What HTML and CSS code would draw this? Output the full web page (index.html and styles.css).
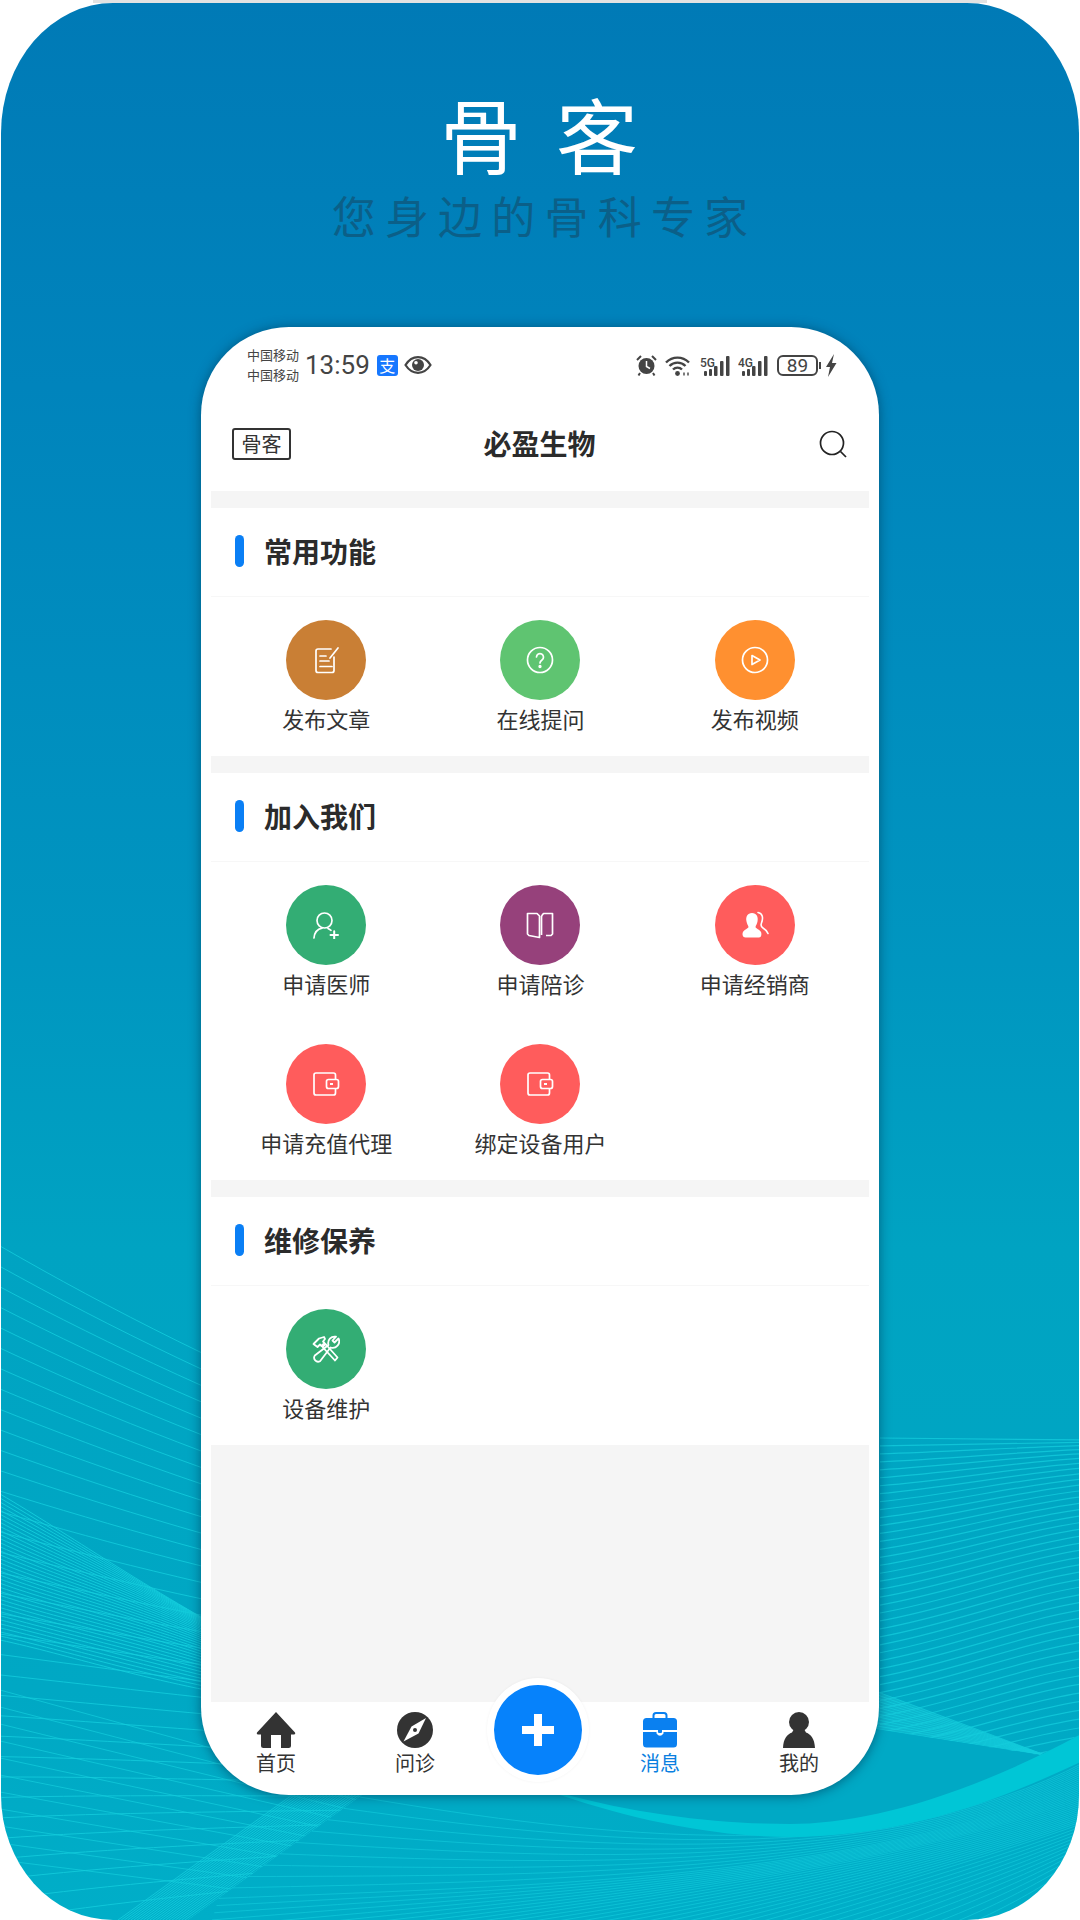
FILE: index.html
```html
<!DOCTYPE html>
<html lang="zh-CN">
<head>
  <meta charset="UTF-8" />
  <title>骨客</title>
  <link rel="stylesheet" href="styles.css">
</head>
<body>
  <div class="top-edge"></div>
  <div class="poster">
    <svg class="waves" viewBox="0 0 1080 1920">
      <defs>
        <clipPath id="left-clip"><path d="M0 1200H500V1700L362 1795L188 1920H0Z"/></clipPath>
      </defs>
      <g id="waves-left" clip-path="url(#left-clip)"></g>
      <g id="waves-right"></g>
    </svg>
    <h1 class="poster-title">骨客</h1>
    <p class="poster-sub">您身边的骨科专家</p>

    <div class="phone">
      <div class="status">
        <div class="carriers"><span>中国移动</span><span>中国移动</span></div>
        <span class="time">13:59</span>
        <span class="alipay">支</span>
        <svg class="eye" width="28" height="18" viewBox="0 0 28 18">
          <path d="M1.5 9C5 3.5 9 1.2 14 1.2S23 3.500 26.500 9C23 14.500 19 16.800 14 16.800S5 14.500 1.500 9Z" fill="none" stroke="#444" stroke-width="2.200"/>
          <circle cx="14" cy="9" r="6" fill="#444"/>
          <circle cx="12" cy="6.800" r="1.800" fill="#fff"/>
        </svg>
        <div class="status-right">
          <svg width="21" height="21" viewBox="0 0 21 21">
            <circle cx="10.500" cy="11" r="8" fill="#444"/>
            <path d="M10.500 6V11.500L14 13.500" fill="none" stroke="#fff" stroke-width="1.500"/>
            <path d="M1 5L5 1M20 5L16 1M4 18L2.500 20.500M17 18L18.500 20.500" stroke="#444" stroke-width="2"/>
          </svg>
          <svg width="27" height="21" viewBox="0 0 27 21" fill="none" stroke="#444" stroke-width="2.400">
            <path d="M1 7.500C7.500 1 17.500 1 24 7.500"/>
            <path d="M4.500 11C9 6.500 16 6.500 20.500 11"/>
            <path d="M8 14.500C10.500 12 14.500 12 17 14.500"/>
            <circle cx="12.500" cy="18.500" r="2.400" fill="#444" stroke="none"/>
            <path d="M19 17.500V20.500M23 17.500V20.500" stroke-width="1.400"/>
          </svg>
          <svg width="30" height="21" viewBox="0 0 30 21">
            <text class="net" x="0" y="11.500">5G</text>
            <g fill="#444">
              <rect x="4" y="16" width="3" height="5" rx="1"/><rect x="9" y="14" width="3" height="7" rx="1"/>
              <rect x="14" y="11" width="3.500" height="10" rx="1"/><rect x="20" y="6" width="3.500" height="15" rx="1"/>
              <rect x="26" y="1" width="3.500" height="20" rx="1"/>
            </g>
          </svg>
          <svg width="30" height="21" viewBox="0 0 30 21">
            <text class="net" x="0" y="11.500">4G</text>
            <g fill="#444">
              <rect x="4" y="16" width="3" height="5" rx="1"/><rect x="9" y="14" width="3" height="7" rx="1"/>
              <rect x="14" y="11" width="3.500" height="10" rx="1"/><rect x="20" y="6" width="3.500" height="15" rx="1"/>
              <rect x="26" y="1" width="3.500" height="20" rx="1"/>
            </g>
          </svg>
          <div class="battery">89</div>
          <span class="battery-nub"></span>
          <svg class="bolt" width="12" height="23" viewBox="0 0 12 23"><path d="M9 0L1 13H5L3 23L11.500 9H7Z" fill="#444"/></svg>
        </div>
      </div>

      <header class="app-bar">
        <span class="app-tag">骨客</span>
        <span class="app-title">必盈生物</span>
        <svg class="search" width="28" height="28" viewBox="0 0 28 28" fill="none" stroke="#222" stroke-width="1.700">
          <circle cx="13" cy="13" r="11.500"/>
          <path d="M21.500 21.500L27 27"/>
        </svg>
      </header>

      <div class="content">
        <div class="gap"></div>
        <section class="group">
          <h2 class="group-title">常用功能</h2>
          <div class="grid">
            <div class="item">
              <div class="circle brown">
                <svg width="28" height="28" viewBox="0 0 28 28" fill="none" stroke="#fff" stroke-width="1.700" stroke-linecap="round">
                  <path d="M22 11V24.500a2 2 0 0 1-2 2H6a2 2 0 0 1-2-2V5a2 2 0 0 1 2-2H19"/>
                  <path d="M8 10H14M8 15H17M8 20.500H20"/>
                  <path d="M18 12L26 2"/>
                </svg>
              </div>
              <span class="item-label">发布文章</span>
            </div>
            <div class="item">
              <div class="circle green">
                <svg width="28" height="28" viewBox="0 0 28 28" fill="none" stroke="#fff" stroke-width="1.700" stroke-linecap="round">
                  <circle cx="14" cy="14" r="12.500"/>
                  <path d="M10.500 11a3.500 3.500 0 1 1 5.500 3c-1.300.9-2 1.600-2 3"/>
                  <circle cx="14" cy="20.500" r=".8" fill="#fff"/>
                </svg>
              </div>
              <span class="item-label">在线提问</span>
            </div>
            <div class="item">
              <div class="circle orange">
                <svg width="28" height="28" viewBox="0 0 28 28" fill="none" stroke="#fff" stroke-width="1.700" stroke-linejoin="round">
                  <circle cx="14" cy="14" r="12.500"/>
                  <path d="M11 9.500L19 14L11 18.500Z"/>
                </svg>
              </div>
              <span class="item-label">发布视频</span>
            </div>
          </div>
        </section>

        <div class="gap"></div>
        <section class="group">
          <h2 class="group-title">加入我们</h2>
          <div class="grid">
            <div class="item">
              <div class="circle teal">
                <svg width="28" height="28" viewBox="0 0 28 28" fill="none" stroke="#fff" stroke-width="1.700" stroke-linecap="round">
                  <circle cx="12.500" cy="9.500" r="7.500"/>
                  <path d="M2 27C2.500 21.500 6 18 10 17.200"/>
                  <path d="M16 17.500C17 18 18 18.500 19 19.300"/>
                  <path d="M18.500 24H26M22.200 20.300V27.700" stroke-width="2"/>
                </svg>
              </div>
              <span class="item-label">申请医师</span>
            </div>
            <div class="item">
              <div class="circle purple">
                <svg width="28" height="28" viewBox="0 0 28 28" fill="none" stroke="#fff" stroke-width="1.700" stroke-linejoin="round">
                  <path d="M1.500 2.500H11L13.500 5V26.500L3 24.500L1.500 23Z"/>
                  <path d="M15.500 5L17.500 2.500H26.500V23L25 24.500H20"/>
                  <path d="M15.500 5V24"/>
                </svg>
              </div>
              <span class="item-label">申请陪诊</span>
            </div>
            <div class="item">
              <div class="circle red">
                <svg width="28" height="28" viewBox="0 0 28 28">
                  <path d="M11 2C15.500 2 17.500 6 16.500 10.500C16 13 14.800 14.500 14.500 16C14.500 17.500 19 18.500 20 21C20.800 23 20.500 26.500 18 26.500H4.500C1.500 26.500 1 23 2 21C3 18.500 7.500 17.500 7.500 16C7.200 14.500 6 13 5.500 10.500C4.500 6 6.500 2 11 2Z" fill="#fff"/>
                  <path d="M17 1.500C21.500 2 22.500 7 20.500 12C19.700 14 19.500 15.500 22 17C24.500 18.500 26 20 27 22.500" fill="none" stroke="#fff" stroke-width="1.600" stroke-linecap="round"/>
                </svg>
              </div>
              <span class="item-label">申请经销商</span>
            </div>
            <div class="item">
              <div class="circle red">
                <svg width="28" height="28" viewBox="0 0 28 28" fill="none" stroke="#fff" stroke-width="1.700">
                  <path d="M23.500 9.500V5a2 2 0 0 0-2-2H4a2 2 0 0 0-2 2V23a2 2 0 0 0 2 2H21.500a2 2 0 0 0 2-2V18.500"/>
                  <rect x="14.500" y="9.500" width="12" height="9" rx="2"/>
                  <path d="M18 14H21" stroke-width="2"/>
                </svg>
              </div>
              <span class="item-label">申请充值代理</span>
            </div>
            <div class="item">
              <div class="circle red">
                <svg width="28" height="28" viewBox="0 0 28 28" fill="none" stroke="#fff" stroke-width="1.700">
                  <path d="M23.500 9.500V5a2 2 0 0 0-2-2H4a2 2 0 0 0-2 2V23a2 2 0 0 0 2 2H21.500a2 2 0 0 0 2-2V18.500"/>
                  <rect x="14.500" y="9.500" width="12" height="9" rx="2"/>
                  <path d="M18 14H21" stroke-width="2"/>
                </svg>
              </div>
              <span class="item-label">绑定设备用户</span>
            </div>
          </div>
        </section>

        <div class="gap"></div>
        <section class="group">
          <h2 class="group-title">维修保养</h2>
          <div class="grid">
            <div class="item">
              <div class="circle teal">
                <svg width="28" height="28" viewBox="0 0 28 28" fill="none" stroke="#fff" stroke-width="1.800" stroke-linejoin="round">
                  <path d="M1.500 9L7 3.500L12 2L13 4L11 6.500L12.500 8L9.500 11L8 9.500L5.500 12Z"/>
                  <path d="M10.500 12L13.500 9L25.500 22.500L23 25.500Z"/>
                  <path d="M26.500 3.500L22.500 7.500L20.500 5.500L24 1.700A6.500 6.500 0 0 0 16.500 10L2.800 20.500A4 4 0 0 0 8 26.200L18.500 12.500A6.500 6.500 0 0 0 26.500 3.500Z"/>
                </svg>
              </div>
              <span class="item-label">设备维护</span>
            </div>
          </div>
        </section>
        <div class="filler"></div>
      </div>

      <nav class="tabbar">
        <div class="tab">
          <svg width="40" height="36" viewBox="0 0 40 36">
            <path fill-rule="evenodd" d="M20 0L39 20.500Q40 22.500 37 22.500H35V33.500Q35 36 32.500 36H25V23H15V36H7.500Q5 36 5 33.500V22.500H3Q0 22.500 1 20.500Z" fill="#333"/>
          </svg>
          <span class="tab-label">首页</span>
        </div>
        <div class="tab">
          <svg width="36" height="36" viewBox="0 0 36 36">
            <circle cx="18" cy="18" r="18" fill="#333"/>
            <path d="M29 6L21.500 21.500L6.500 29.500L14.500 14.500Z" fill="#fff"/>
            <circle cx="18" cy="18" r="2" fill="#333"/>
          </svg>
          <span class="tab-label">问诊</span>
        </div>
        <div class="tab">
          <div class="add-ring">
            <div class="add-btn">
              <svg width="32" height="32" viewBox="0 0 32 32"><path d="M12 0H20V12H32V20H20V32H12V20H0V12H12Z" fill="#fff"/></svg>
            </div>
          </div>
        </div>
        <div class="tab active">
          <svg width="36" height="36" viewBox="0 0 36 36">
            <path d="M11.500 6V3.500Q11.500 1 14 1H22Q24.500 1 24.500 3.500V6" fill="none" stroke="#0a80f0" stroke-width="2"/>
            <path d="M4.500 6H31.500Q35 6 35 9.500V18H1V9.500Q1 6 4.500 6Z" fill="#0a80f0"/>
            <path d="M1 20H14.500V21.500Q18 26 21.500 21.500V20H35V32Q35 35.500 31.500 35.500H4.500Q1 35.500 1 32Z" fill="#0a80f0"/>
            <rect x="16" y="17" width="4" height="4" rx="1" fill="#0a80f0"/>
          </svg>
          <span class="tab-label">消息</span>
        </div>
        <div class="tab">
          <svg width="32" height="36" viewBox="0 0 32 36">
            <ellipse cx="16" cy="10" rx="10" ry="10" fill="#333"/>
            <path d="M11 17H21L23 20.500C28 22.500 31.500 26.500 32 36H0C.5 26.500 4 22.500 9 20.500Z" fill="#333"/>
          </svg>
          <span class="tab-label">我的</span>
        </div>
      </nav>
    </div>
  </div>
  <script src="waves.js"></script>
</body>
</html>
```

FILE: styles.css
```css
* {
  box-sizing: border-box;
}
body {
  margin: 0;
  width: 1080px;
  height: 1920px;
  background: #fff;
  font-family: "Noto Sans CJK SC", "Noto Sans", sans-serif;
  color: #333;
  overflow: hidden;
}
.top-edge {
  height: 3px;
  margin: 0 93px;
  background: #e2e2e2;
}
.poster {
  position: relative;
  height: 1917px;
  margin: 0 1px;
  padding-top: 90px;
  overflow: hidden;
  border-radius: 112px 112px 112px 112px / 130px 130px 125px 125px;
  background: linear-gradient(180deg, #007ab6 0%, #0084bc 20%, #0096c0 50%, #00a3c2 65%, #00a8c4 88%, #00aec8 100%);
}
.waves {
  position: absolute;
  left: -1px;
  top: -3px;
  width: 1080px;
  height: 1920px;
}
.poster-title {
  position: relative;
  margin: 0;
  padding-left: 32px;
  font-size: 82px;
  line-height: 80px;
  font-weight: 400;
  letter-spacing: 34px;
  text-align: center;
  color: #fff;
}
.poster-sub {
  position: relative;
  margin: 20px 0 0;
  padding-left: 9px;
  font-size: 44px;
  line-height: 44px;
  letter-spacing: 9.200px;
  text-align: center;
  color: #0b5f88;
}
.phone {
  position: relative;
  display: flex;
  flex-direction: column;
  width: 678px;
  height: 1468px;
  margin: 90px auto 0;
  border-radius: 88px;
  background: #fff;
  box-shadow: 0 1px 12px rgba(0, 50, 80, 0.6);
}

/* status bar */
.status {
  display: flex;
  align-items: center;
  height: 70px;
  padding: 6px 42px 0 46px;
  color: #444;
}
.carriers {
  display: flex;
  flex-direction: column;
  width: 54px;
  font-size: 13px;
  line-height: 20px;
  white-space: nowrap;
}
.time {
  margin-left: 4px;
  font-family: Roboto, sans-serif;
  font-size: 26px;
}
.alipay {
  display: flex;
  align-items: center;
  justify-content: center;
  width: 21px;
  height: 21px;
  margin-left: 7px;
  border-radius: 3px;
  background: #1677ff;
  color: #fff;
  font-size: 16px;
}
.eye {
  margin-left: 6px;
}
.status-right {
  display: flex;
  align-items: center;
  gap: 8px;
  margin-left: auto;
}
.net {
  font-family: Roboto, sans-serif;
  font-size: 12px;
  font-weight: 500;
  fill: #444;
}
.battery {
  width: 41px;
  height: 21px;
  margin-left: 1px;
  border: 2px solid #444;
  border-radius: 6px;
  font-family: Roboto, sans-serif;
  font-size: 19px;
  line-height: 17px;
  text-align: center;
}
.battery-nub {
  width: 2px;
  height: 7px;
  margin-left: -7px;
  background: #444;
}
.bolt {
  margin-left: -4px;
}

/* title bar */
.app-bar {
  display: grid;
  grid-template-columns: 1fr auto 1fr;
  align-items: center;
  height: 94px;
  padding: 0 32px 0 31px;
}
.app-tag {
  width: 59px;
  height: 32px;
  border: 2px solid #333;
  border-radius: 3px;
  font-size: 20px;
  line-height: 27px;
  text-align: center;
}
.app-title {
  font-size: 28px;
  line-height: 36px;
  padding-bottom: 3px;
  font-weight: 700;
  color: #2b2b2b;
}
.search {
  justify-self: end;
}

/* main list */
.content {
  display: flex;
  flex-direction: column;
  flex: 1;
  padding: 0 10px;
}
.gap {
  height: 17px;
  background: #f5f5f5;
}
.group-title {
  display: flex;
  align-items: center;
  gap: 20px;
  height: 89px;
  margin: 0;
  padding: 0 0 3px 24px;
  border-bottom: 1px solid #f7f7f7;
  font-size: 28px;
  font-weight: 700;
  color: #2b2b2b;
}
.group-title::before {
  content: "";
  width: 9px;
  height: 32px;
  border-radius: 5px;
  background: #0a7ff5;
}
.grid {
  display: grid;
  grid-template-columns: repeat(3, 1fr);
  row-gap: 48px;
  padding: 23px 7px 25px 8px;
}
.item {
  display: flex;
  flex-direction: column;
  align-items: center;
}
.circle {
  display: flex;
  align-items: center;
  justify-content: center;
  width: 80px;
  height: 80px;
  border-radius: 50%;
}
.brown { background: #c97f35; }
.green { background: #5fc471; }
.orange { background: #ff9030; }
.teal { background: #33ad74; }
.purple { background: #96417b; }
.red { background: #ff5c5c; }
.item-label {
  margin-top: 5px;
  font-size: 22px;
  line-height: 26px;
  white-space: nowrap;
}
.filler {
  flex: 1;
  background: #f5f5f5;
}

/* tab bar */
.tabbar {
  display: grid;
  grid-template-columns: 150px 128px 118px 126px 152px;
  height: 93px;
  border-radius: 0 0 88px 88px;
}
.tab {
  display: flex;
  flex-direction: column;
  align-items: center;
  padding-top: 10px;
}
.tab svg {
  display: block;
}
.tab-label {
  margin-top: 3px;
  font-size: 20px;
  line-height: 24px;
}
.active .tab-label {
  color: #0a7fe0;
}
.add-ring {
  flex: none;
  width: 102px;
  height: 104px;
  margin-top: -34px;
  padding: 7px;
  border-radius: 50%;
  background: #fff;
  box-shadow: 0 0 3px rgba(0, 0, 0, 0.05);
}
.add-btn {
  display: flex;
  align-items: center;
  justify-content: center;
  height: 100%;
  border-radius: 50%;
  background: #0682fb;
}
```

FILE: waves.js
```js
// background wave lines, drawn as fans of curves across the poster
const NS = 'http://www.w3.org/2000/svg';
const leftGroup = document.getElementById('waves-left');
const rightGroup = document.getElementById('waves-right');
const LINE = '#14cddd';

function addLine(group, d, width, opacity) {
  const p = document.createElementNS(NS, 'path');
  p.setAttribute('d', d);
  p.setAttribute('fill', 'none');
  p.setAttribute('stroke', LINE);
  p.setAttribute('stroke-width', width);
  p.setAttribute('opacity', opacity);
  group.appendChild(p);
}

function addShape(group, d, fill) {
  const p = document.createElementNS(NS, 'path');
  p.setAttribute('d', d);
  p.setAttribute('fill', fill);
  group.appendChild(p);
}

function fan(group, n, width, opacity, line) {
  for (let i = 0; i <= n; i++) {
    addLine(group, line(i / n), width, opacity);
  }
}

// curve between hand-placed key lines, keys = [[t, x0,y0, x1,y1, x2,y2, x3,y3], ...]
function keyed(keys, t) {
  let k = 0;
  while (k < keys.length - 2 && t > keys[k + 1][0]) k++;
  const a = keys[k], b = keys[k + 1];
  const f = (t - a[0]) / (b[0] - a[0]);
  const v = a.map((n, i) => n + (b[i] - n) * f);
  return `M${v[1]} ${v[2]} C${v[3]} ${v[4]} ${v[5]} ${v[6]} ${v[7]} ${v[8]}`;
}

// left side: big sparse fan
fan(leftGroup, 33, 1, 0.8, t => {
  return `M0 ${1246 + 674 * t} C220 ${1373 + 512 * t} 500 ${1500 + 370 * t} 900 ${1600 + 230 * t}`;
});

// left side: dense fan, bunched at its upper edge
fan(leftGroup, 36, 1, 0.9, t => {
  const k = t * t;
  return `M0 ${1494 + 146 * t} C70 ${1535 + 120 * t} 140 ${1585 + 95 * k} 260 ${1650 + 50 * k}`;
});

// left side: lines falling towards the mesh edge
fan(leftGroup, 10, 1, 0.7, t => {
  return `M0 ${1690 + 170 * t} L400 ${1800 + 110 * t}`;
});

// ribbon of lines along the mesh edge
fan(leftGroup, 22, 1, 0.85, t => {
  const d = 70 * t;
  return `M${188 - d} 1920 L${362 - d} 1795 L${480 - d} 1710`;
});

// right side: fan above the band
fan(rightGroup, 44, 1.200, 0.75, t => {
  const y0 = 1438 + 350 * t;
  const y1 = 1440 + 305 * Math.pow(t, 1.3);
  return `M880 ${y0} C950 ${y0 - (y0 - y1) * 0.25} 1020 ${y1 + (y0 - y1) * 0.2} 1085 ${y1}`;
});

// mesh strip that runs down to the band
addShape(rightGroup, 'M870 1689L1045 1755L870 1728Z', 'rgba(30, 205, 220, 0.4)');
fan(rightGroup, 12, 1, 0.7, t => {
  return `M870 ${1689 + 39 * t} L1045 1755`;
});

// clean area between phone bottom and band
addShape(rightGroup, 'M400 1700L870 1728L1045 1756L1085 1732C960 1800 860 1824 790 1824C720 1824 640 1815 560 1793Z', '#00a9c5');

// lines under the band
fan(rightGroup, 44, 1, 0.6, t => {
  return keyed([
    [0, 360, 1797, 600, 1838, 880, 1870, 1085, 1762],
    [0.2, 219, 1897, 540, 1885, 860, 1880, 1085, 1780],
    [0.4, 200, 1960, 560, 1905, 880, 1875, 1085, 1797],
    [0.7, 500, 1990, 750, 1925, 950, 1870, 1085, 1822],
    [1, 900, 1960, 1000, 1925, 1050, 1890, 1085, 1860]
  ], t);
});

// bright band
addShape(rightGroup, 'M560 1793C640 1815 720 1824 790 1824C860 1824 960 1800 1085 1732L1085 1760C990 1805 900 1836 790 1837C720 1837 640 1822 560 1795Z', '#00c6d6');
```
